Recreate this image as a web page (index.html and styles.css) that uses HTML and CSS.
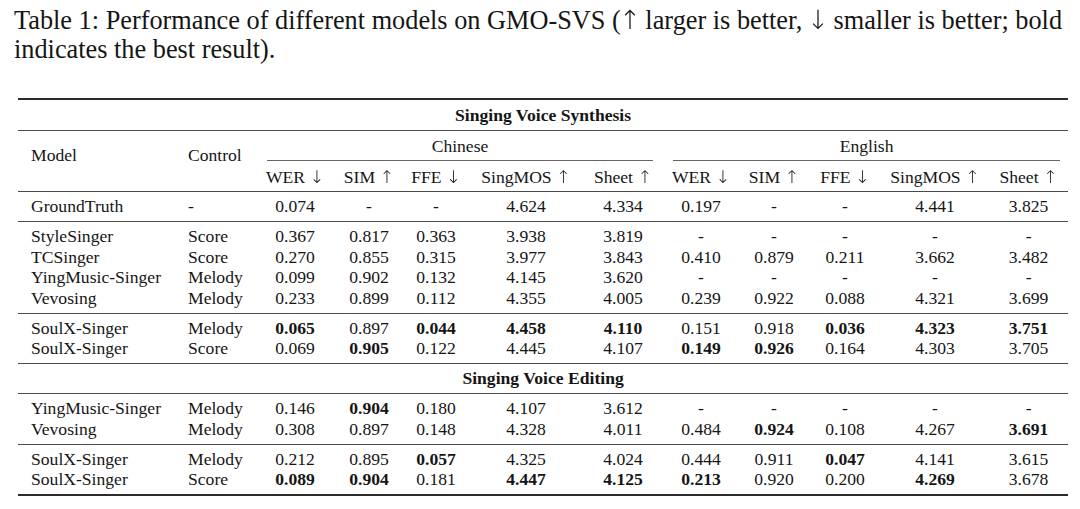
FILE: index.html
```html
<!DOCTYPE html>
<html lang="en">
<head>
<meta charset="utf-8">
<title>Table 1: Performance of different models on GMO-SVS</title>
<link rel="stylesheet" href="styles.css">
</head>
<body>
<p class="caption"><span class="line">Table 1: Performance of different models on GMO-SVS (<span class="ar">↑</span> larger is better, <span class="ar">↓</span> smaller is better; bold</span><br><span class="line">indicates the best result).</span></p>
<table class="results">
  <colgroup>
    <col class="c-model"><col class="c-control">
    <col class="c-wer"><col class="c-sim"><col class="c-ffe"><col class="c-mos"><col class="c-sheet">
    <col class="c-wer2"><col class="c-sim2"><col class="c-ffe2"><col class="c-mos2"><col class="c-sheet2">
  </colgroup>
  <tbody>
    <tr class="section top"><td colspan="12">Singing Voice Synthesis</td></tr>
    <tr class="head-a rule">
      <td rowspan="2" class="name rs">Model</td>
      <td rowspan="2" class="ctrl rs">Control</td>
      <td colspan="5"><div class="cmid cmid-l">Chinese</div></td>
      <td colspan="5"><div class="cmid cmid-r">English</div></td>
    </tr>
    <tr class="head-b">
      <td>WER <span class="ar">↓</span></td><td>SIM <span class="ar">↑</span></td><td>FFE <span class="ar">↓</span></td><td>SingMOS <span class="ar">↑</span></td><td>Sheet <span class="ar">↑</span></td>
      <td>WER <span class="ar">↓</span></td><td>SIM <span class="ar">↑</span></td><td>FFE <span class="ar">↓</span></td><td>SingMOS <span class="ar">↑</span></td><td>Sheet <span class="ar">↑</span></td>
    </tr>
    <tr class="single rule">
      <td class="name">GroundTruth</td><td class="ctrl">-</td>
      <td>0.074</td><td>-</td><td>-</td><td>4.624</td><td>4.334</td>
      <td>0.197</td><td>-</td><td>-</td><td>4.441</td><td>3.825</td>
    </tr>

    <tr class="first rule">
      <td class="name">StyleSinger</td><td class="ctrl">Score</td>
      <td>0.367</td><td>0.817</td><td>0.363</td><td>3.938</td><td>3.819</td>
      <td>-</td><td>-</td><td>-</td><td>-</td><td>-</td>
    </tr>
    <tr>
      <td class="name">TCSinger</td><td class="ctrl">Score</td>
      <td>0.270</td><td>0.855</td><td>0.315</td><td>3.977</td><td>3.843</td>
      <td>0.410</td><td>0.879</td><td>0.211</td><td>3.662</td><td>3.482</td>
    </tr>
    <tr>
      <td class="name">YingMusic-Singer</td><td class="ctrl">Melody</td>
      <td>0.099</td><td>0.902</td><td>0.132</td><td>4.145</td><td>3.620</td>
      <td>-</td><td>-</td><td>-</td><td>-</td><td>-</td>
    </tr>
    <tr class="last">
      <td class="name">Vevosing</td><td class="ctrl">Melody</td>
      <td>0.233</td><td>0.899</td><td>0.112</td><td>4.355</td><td>4.005</td>
      <td>0.239</td><td>0.922</td><td>0.088</td><td>4.321</td><td>3.699</td>
    </tr>

    <tr class="first rule">
      <td class="name">SoulX-Singer</td><td class="ctrl">Melody</td>
      <td class="best">0.065</td><td>0.897</td><td class="best">0.044</td><td class="best">4.458</td><td class="best">4.110</td>
      <td>0.151</td><td>0.918</td><td class="best">0.036</td><td class="best">4.323</td><td class="best">3.751</td>
    </tr>
    <tr class="last">
      <td class="name">SoulX-Singer</td><td class="ctrl">Score</td>
      <td>0.069</td><td class="best">0.905</td><td>0.122</td><td>4.445</td><td>4.107</td>
      <td class="best">0.149</td><td class="best">0.926</td><td>0.164</td><td>4.303</td><td>3.705</td>
    </tr>

    <tr class="section rule"><td colspan="12">Singing Voice Editing</td></tr>

    <tr class="first rule">
      <td class="name">YingMusic-Singer</td><td class="ctrl">Melody</td>
      <td>0.146</td><td class="best">0.904</td><td>0.180</td><td>4.107</td><td>3.612</td>
      <td>-</td><td>-</td><td>-</td><td>-</td><td>-</td>
    </tr>
    <tr class="last">
      <td class="name">Vevosing</td><td class="ctrl">Melody</td>
      <td>0.308</td><td>0.897</td><td>0.148</td><td>4.328</td><td>4.011</td>
      <td>0.484</td><td class="best">0.924</td><td>0.108</td><td>4.267</td><td class="best">3.691</td>
    </tr>

    <tr class="first rule">
      <td class="name">SoulX-Singer</td><td class="ctrl">Melody</td>
      <td>0.212</td><td>0.895</td><td class="best">0.057</td><td>4.325</td><td>4.024</td>
      <td>0.444</td><td>0.911</td><td class="best">0.047</td><td>4.141</td><td>3.615</td>
    </tr>
    <tr class="last bottom">
      <td class="name">SoulX-Singer</td><td class="ctrl">Score</td>
      <td class="best">0.089</td><td class="best">0.904</td><td>0.181</td><td class="best">4.447</td><td class="best">4.125</td>
      <td class="best">0.213</td><td>0.920</td><td>0.200</td><td class="best">4.269</td><td>3.678</td>
    </tr>
  </tbody>
</table>
</body>
</html>
```

FILE: styles.css
```css
html, body {
  margin: 0;
  padding: 0;
  background: #ffffff;
}

body {
  font-family: "Liberation Serif", "Times New Roman", serif;
  color: #151515;
}

.caption {
  margin: 6px 0 0 0;
  padding-left: 14px;
  font-size: 26.3px;
  line-height: 29px;
}

.caption .line {
  white-space: nowrap;
}

/* thin, tall arrows like the LaTeX math arrows */
.ar {
  display: inline-block;
  font-family: "DejaVu Sans", sans-serif;
  font-weight: 200;
  color: #151515;
  filter: grayscale(1);
}

.caption .ar {
  margin: 0 -2px;
}

.results {
  margin: 34px 0 0 18px;
  width: 1050px;
  table-layout: fixed;
  border-collapse: separate;
  border-spacing: 0;
  font-size: 17.6px;
}

.c-model { width: 158px; }
.c-control { width: 79px; }
.c-wer { width: 80px; }
.c-sim { width: 68px; }
.c-ffe { width: 66px; }
.c-mos { width: 114px; }
.c-sheet { width: 80px; }
.c-wer2 { width: 76px; }
.c-sim2 { width: 70px; }
.c-ffe2 { width: 72px; }
.c-mos2 { width: 108px; }
.c-sheet2 { width: 79px; }

.results td {
  padding: 0;
  line-height: 20.7px;
  text-align: center;
  white-space: nowrap;
  vertical-align: top;
}

.results td.name {
  text-align: left;
  padding-left: 13px;
}

.results td.ctrl {
  text-align: left;
  padding-left: 12px;
}

.results td.best {
  font-weight: bold;
}

/* rules */
.results tr.top td {
  border-top: 2px solid #2c2c2c;
}

.results tr.rule td {
  border-top: 1px solid #4a4a4a;
}

.results tr.bottom td {
  border-bottom: 2px solid #2c2c2c;
}

/* section titles */
.results tr.section td {
  font-weight: bold;
  padding-top: 4.15px;
  padding-bottom: 4.15px;
}

.results tr.section.top td {
  padding-top: 4.65px;
  padding-bottom: 4.65px;
}

/* header rows */
.results td.rs {
  padding-top: 13.65px;
}

.cmid {
  padding: 5px 0 3.3px 0;
  border-bottom: 1px solid #666;
}

.cmid-l {
  margin: 0 10px 0 12px;
}

.cmid-r {
  margin: 0 8px 0 10px;
}

.results tr.head-b td {
  padding-top: 6px;
  padding-bottom: 3.3px;
}

/* data groups */
.results tr.single td {
  padding-top: 4.15px;
  padding-bottom: 4.15px;
}

.results tr.first td {
  padding-top: 4px;
}

.results tr.last td {
  padding-bottom: 4px;
}
```
